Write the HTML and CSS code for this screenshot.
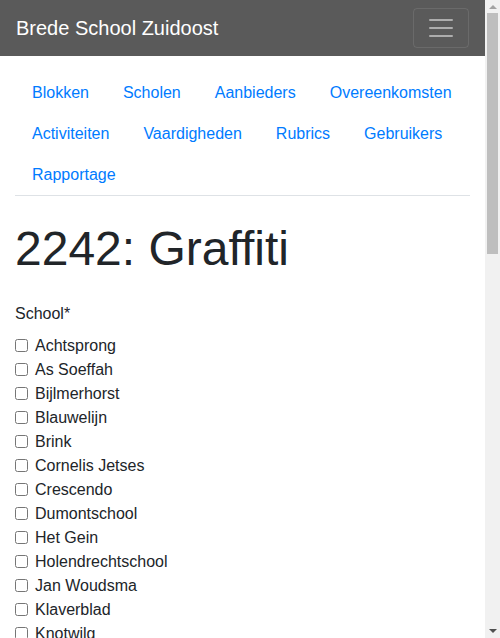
FILE: index.html
```html
<!DOCTYPE html>
<html lang="nl">
<head>
<meta charset="utf-8">
<title>Brede School Zuidoost</title>
<link rel="stylesheet" href="styles.css">
</head>
<body>
<nav class="navbar">
  <a class="brand" href="#">Brede School Zuidoost</a>
  <button class="toggler" type="button" aria-label="Menu">
    <svg class="toggler-icon" viewBox="0 0 30 30" width="30" height="30"><path d="M4 7h22M4 15h22M4 23h22" stroke="rgba(255,255,255,0.5)" stroke-width="2" stroke-linecap="round" stroke-miterlimit="10" fill="none"/></svg>
  </button>
</nav>
<main class="container">
  <ul class="tabs">
    <li><a href="#">Blokken</a></li>
    <li><a href="#">Scholen</a></li>
    <li><a href="#">Aanbieders</a></li>
    <li><a href="#">Overeenkomsten</a></li>
    <li><a href="#">Activiteiten</a></li>
    <li><a href="#">Vaardigheden</a></li>
    <li><a href="#">Rubrics</a></li>
    <li><a href="#">Gebruikers</a></li>
    <li><a href="#">Rapportage</a></li>
  </ul>
  <h1 class="title">2242: Graffiti</h1>
  <form class="form">
    <div class="group">
      <label class="label">School*</label>
      <div class="checks">
        <label class="check"><input type="checkbox"> Achtsprong</label>
        <label class="check"><input type="checkbox"> As Soeffah</label>
        <label class="check"><input type="checkbox"> Bijlmerhorst</label>
        <label class="check"><input type="checkbox"> Blauwelijn</label>
        <label class="check"><input type="checkbox"> Brink</label>
        <label class="check"><input type="checkbox"> Cornelis Jetses</label>
        <label class="check"><input type="checkbox"> Crescendo</label>
        <label class="check"><input type="checkbox"> Dumontschool</label>
        <label class="check"><input type="checkbox"> Het Gein</label>
        <label class="check"><input type="checkbox"> Holendrechtschool</label>
        <label class="check"><input type="checkbox"> Jan Woudsma</label>
        <label class="check"><input type="checkbox"> Klaverblad</label>
        <label class="check"><input type="checkbox"> Knotwilg</label>
        <label class="check"><input type="checkbox"> Kraal</label>
        <label class="check"><input type="checkbox"> Kameleon</label>
        <label class="check"><input type="checkbox"> Nelson Mandela</label>
        <label class="check"><input type="checkbox"> Ookmeer</label>
        <label class="check"><input type="checkbox"> Polsstok</label>
        <label class="check"><input type="checkbox"> Regenboog</label>
        <label class="check"><input type="checkbox"> Rosa Boekdrukker</label>
        <label class="check"><input type="checkbox"> Samenspel</label>
        <label class="check"><input type="checkbox"> Scala</label>
        <label class="check"><input type="checkbox"> Vlinderboom</label>
        <label class="check"><input type="checkbox"> Wereldboom</label>
        <label class="check"><input type="checkbox"> Zonnehof</label>
      </div>
    </div>
    <div class="group">
      <label class="label" for="blok">Blok*</label>
      <select id="blok" class="control"><option>Blok 3</option></select>
    </div>
    <div class="group">
      <label class="label" for="aanbieder">Aanbieder*</label>
      <select id="aanbieder" class="control"><option>Urban Art</option></select>
    </div>
    <div class="group">
      <label class="label" for="titel">Titel*</label>
      <input id="titel" class="control" type="text" value="Graffiti">
    </div>
    <div class="group">
      <label class="label" for="omschrijving">Omschrijving</label>
      <textarea id="omschrijving" class="control area" rows="4"></textarea>
    </div>
    <div class="group">
      <label class="label" for="groepen">Groepen</label>
      <input id="groepen" class="control" type="text" value="5 t/m 8">
    </div>
    <div class="group">
      <label class="label" for="max">Maximaal aantal deelnemers</label>
      <input id="max" class="control" type="text" value="15">
    </div>
    <button class="btn" type="submit">Opslaan</button>
  </form>
</main>
<div class="scrollbar" aria-hidden="true">
  <span class="arrow arrow-up"></span>
  <span class="thumb"></span>
  <span class="arrow arrow-down"></span>
</div>
</body>
</html>
```
FILE: styles.css
```css
* { box-sizing: border-box; }
html, body {
  font-family: "Liberation Sans", Arial, sans-serif;
  font-size: 16px;
  line-height: 1.5;
  color: #212529;
  background: #fff;
}
html { margin: 0; }
body { margin: 0 15px 0 0; }
.navbar {
  background: #5a5a5a;
  padding: 8px 16px;
  display: flex;
  align-items: center;
  justify-content: space-between;
  height: 56px;
}
.brand {
  color: #fff;
  font-size: 20px;
  line-height: 30px;
  padding: 5px 0;
  text-decoration: none;
}
.toggler {
  width: 56px;
  height: 40px;
  padding: 4px 12px;
  background: transparent;
  border: 1px solid rgba(255,255,255,0.1);
  border-radius: 4px;
  display: flex;
  align-items: center;
  justify-content: center;
}
.toggler-icon { display: block; }
.container {
  padding: 16px 15px 24px;
}
.tabs {
  list-style: none;
  margin: 0;
  padding: 0;
  display: flex;
  flex-wrap: wrap;
  border-bottom: 1px solid #dee2e6;
}
.tabs li { margin-bottom: -1px; }
.tabs a {
  display: block;
  padding: 8px 16px;
  border: 1px solid transparent;
  color: #007bff;
  text-decoration: none;
  line-height: 24px;
}
.title {
  font-size: 48px;
  font-weight: 400;
  line-height: 1.2;
  margin: 24px 0 8px;
}
.group { margin-bottom: 16px; }
.label {
  display: inline-block;
  margin-bottom: 8px;
  padding-top: 16px;
}
.group + .group .label { padding-top: 0; }
.checks { display: flex; flex-direction: column; }
.check {
  position: relative;
  padding-left: 20px;
  line-height: 24px;
}
.check input {
  position: absolute;
  left: 0;
  top: 5px;
  margin: 0;
  width: 13px;
  height: 13px;
}
.control {
  display: block;
  width: 100%;
  height: 38px;
  padding: 6px 12px;
  font: inherit;
  color: #495057;
  background: #fff;
  border: 1px solid #ced4da;
  border-radius: 4px;
}
.area { height: auto; }
.btn {
  font: inherit;
  color: #fff;
  background: #007bff;
  border: 1px solid #007bff;
  border-radius: 4px;
  padding: 6px 12px;
}

/* emulated browser scrollbar overlaying the right edge */
.scrollbar {
  position: fixed;
  top: 0;
  right: 0;
  bottom: 0;
  width: 15px;
  background: #f1f1f1;
  display: flex;
  flex-direction: column;
  align-items: center;
}
.arrow {
  width: 0;
  height: 0;
  border-left: 4px solid transparent;
  border-right: 4px solid transparent;
}
.arrow-up {
  margin-top: 5px;
  border-bottom: 4px solid #a3a3a3;
}
.thumb {
  width: 11px;
  height: 241px;
  margin-top: 4px;
  background: #bebebe;
}
.arrow-down {
  margin-top: auto;
  margin-bottom: 5px;
  border-top: 4px solid #505050;
}
```
